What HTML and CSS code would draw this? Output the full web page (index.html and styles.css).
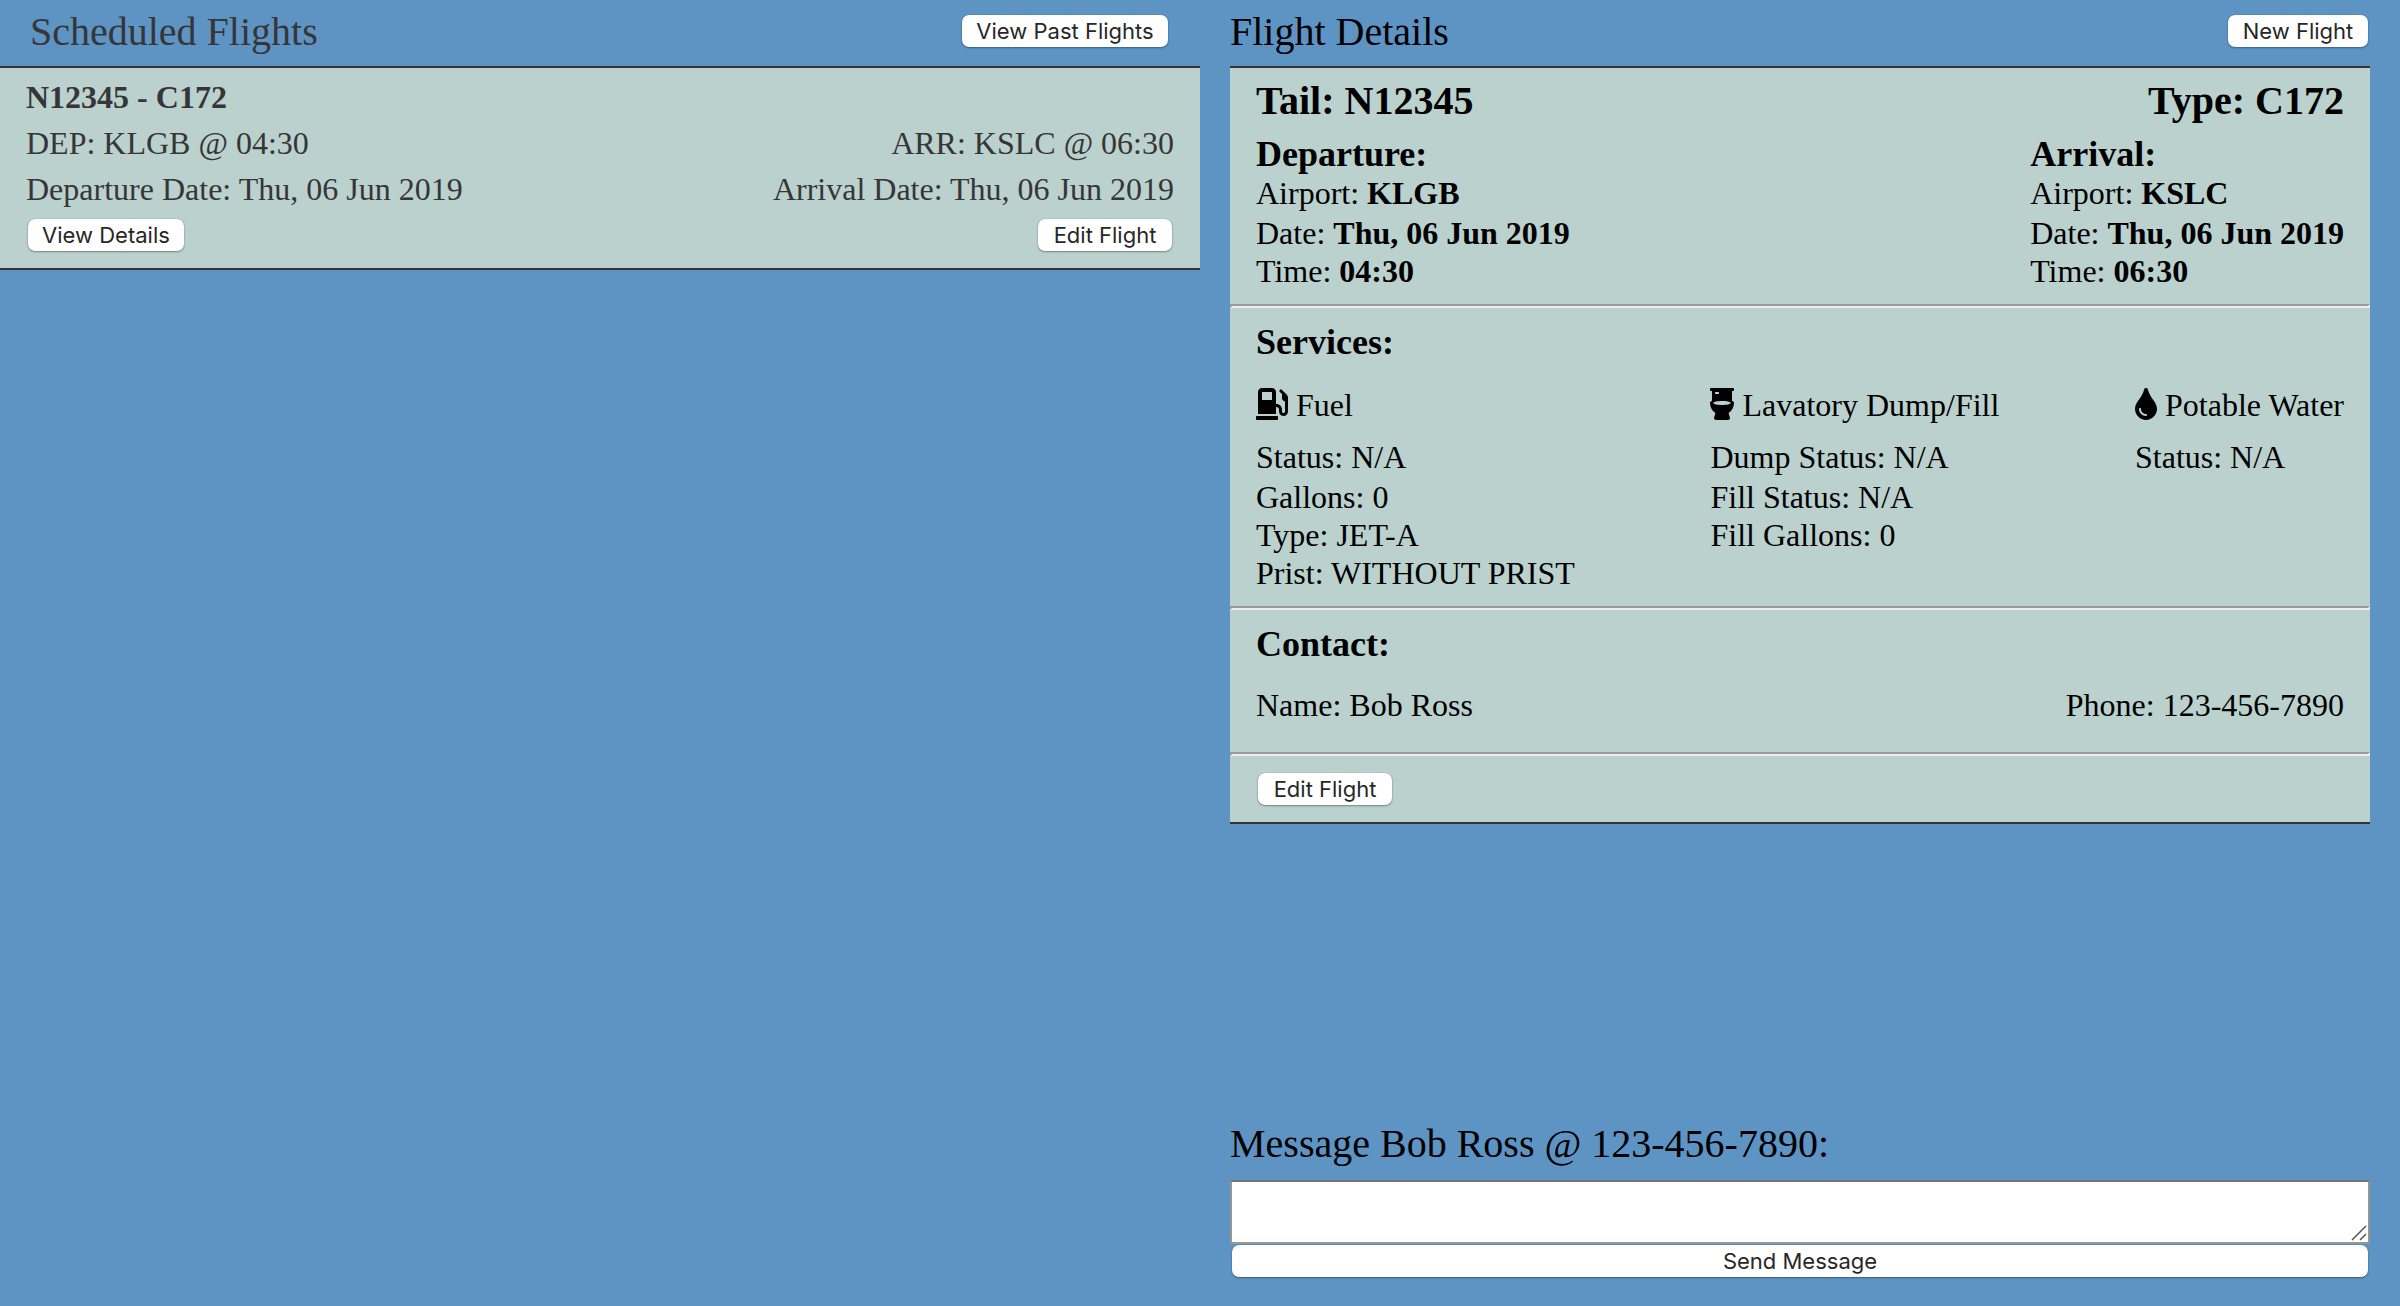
FILE: index.html
```html
<!DOCTYPE html>
<html lang="en">
<head>
<meta charset="utf-8">
<title>Flights</title>
<link rel="stylesheet" href="styles.css">
</head>
<body>
<main class="page">
  <section class="scheduled">
    <header class="bar bar-scheduled">
      <h2 class="title">Scheduled Flights</h2>
      <button class="btn btn-past">View Past Flights</button>
    </header>
    <article class="flight">
      <div class="flight-row"><strong>N12345 - C172</strong></div>
      <div class="flight-row"><span>DEP: KLGB @ 04:30</span><span>ARR: KSLC @ 06:30</span></div>
      <div class="flight-row"><span>Departure Date: Thu, 06 Jun 2019</span><span>Arrival Date: Thu, 06 Jun 2019</span></div>
      <div class="flight-actions">
        <button class="btn btn-view">View Details</button>
        <button class="btn btn-edit">Edit Flight</button>
      </div>
    </article>
  </section>

  <section class="details">
    <header class="bar">
      <h2 class="title">Flight Details</h2>
      <button class="btn btn-new">New Flight</button>
    </header>
    <article class="card">
      <div class="block block-flight">
        <div class="split headline"><span>Tail: N12345</span><span>Type: C172</span></div>
        <div class="split">
          <div class="leg">
            <h3 class="subtitle">Departure:</h3>
            <p class="line first">Airport: <strong>KLGB</strong></p>
            <p class="line">Date: <strong>Thu, 06 Jun 2019</strong></p>
            <p class="line">Time: <strong>04:30</strong></p>
          </div>
          <div class="leg">
            <h3 class="subtitle">Arrival:</h3>
            <p class="line first">Airport: <strong>KSLC</strong></p>
            <p class="line">Date: <strong>Thu, 06 Jun 2019</strong></p>
            <p class="line">Time: <strong>06:30</strong></p>
          </div>
        </div>
      </div>
      <hr class="rule">
      <div class="block">
        <h3 class="subtitle">Services:</h3>
        <div class="split services">
          <div class="service">
            <p class="line service-name">
              <svg class="icon" width="32" height="32" viewBox="0 0 512 512"><path d="M336 448H16c-8.800 0-16 7.200-16 16v32c0 8.800 7.200 16 16 16h320c8.800 0 16-7.200 16-16v-32c0-8.800-7.200-16-16-16zm157.200-340.700l-81-81c-6.200-6.200-16.400-6.200-22.600 0l-11.300 11.300c-6.200 6.200-6.200 16.400 0 22.600L416 97.900V160c0 28.100 20.900 51.300 48 55.200V376c0 13.200-10.800 24-24 24s-24-10.800-24-24v-32c0-48.600-39.400-88-88-88h-8V64c0-35.300-28.700-64-64-64H96C60.700 0 32 28.700 32 64v352h288V304h8c22.100 0 40 17.900 40 40v27.800c0 37.700 27 72 64.500 75.900 43 4.300 79.500-29.500 79.500-71.700V152.600c0-17-6.800-33.300-18.800-45.300zM256 192H96V64h160v128z"/></svg>
              <span>Fuel</span>
            </p>
            <p class="line first">Status: N/A</p>
            <p class="line">Gallons: 0</p>
            <p class="line">Type: JET-A</p>
            <p class="line">Prist: WITHOUT PRIST</p>
          </div>
          <div class="service">
            <p class="line service-name">
              <svg class="icon" width="24" height="32" viewBox="0 0 384 512"><path d="M368 48c8.800 0 16-7.200 16-16V16c0-8.800-7.200-16-16-16H16C7.200 0 0 7.200 0 16v16c0 8.800 7.200 16 16 16h16v156.700C11.800 214.800 0 226.900 0 240c0 67.200 34.600 126.200 86.800 160.500l-21.400 70.200C59.100 491.200 74.500 512 96 512h192c21.500 0 36.900-20.800 30.600-41.300l-21.400-70.200C349.400 366.200 384 307.200 384 240c0-13.100-11.800-25.200-32-35.300V48h16zM80 72c0-4.400 3.600-8 8-8h48c4.400 0 8 3.600 8 8v16c0 4.400-3.600 8-8 8H88c-4.400 0-8-3.600-8-8V72zm112 200c-77.100 0-139.600-14.300-139.600-32s62.500-32 139.600-32 139.600 14.300 139.600 32-62.500 32-139.600 32z"/></svg>
              <span>Lavatory Dump/Fill</span>
            </p>
            <p class="line first">Dump Status: N/A</p>
            <p class="line">Fill Status: N/A</p>
            <p class="line">Fill Gallons: 0</p>
          </div>
          <div class="service">
            <p class="line service-name">
              <svg class="icon" width="22" height="32" viewBox="0 0 352 512"><path d="M205.220 22.090c-7.940-28.780-49.440-30.120-58.440 0C100.010 179.850 0 222.720 0 333.910 0 432.350 78.720 512 176 512s176-79.650 176-178.090c0-111.750-99.790-153.340-146.780-311.820zM176 448c-61.750 0-112-50.250-112-112 0-8.840 7.160-16 16-16s16 7.160 16 16c0 44.110 35.890 80 80 80 8.840 0 16 7.160 16 16s-7.160 16-16 16z"/></svg>
              <span>Potable Water</span>
            </p>
            <p class="line first">Status: N/A</p>
          </div>
        </div>
      </div>
      <hr class="rule">
      <div class="block block-contact">
        <h3 class="subtitle">Contact:</h3>
        <div class="split contact"><p class="line">Name: Bob Ross</p><p class="line">Phone: 123-456-7890</p></div>
      </div>
      <hr class="rule">
      <div class="card-actions"><button class="btn btn-edit">Edit Flight</button></div>
    </article>

    <form class="message">
      <label class="message-label" for="message">Message Bob Ross @ 123-456-7890:</label>
      <div class="field">
        <textarea class="message-box" id="message"></textarea>
        <svg class="grip" width="16" height="16" viewBox="0 0 16 16"><path d="M1 15L15 1M9 15L15 9"/></svg>
      </div>
      <button class="btn btn-send" type="button">Send Message</button>
    </form>
  </section>
</main>
</body>
</html>
```
FILE: styles.css
```css
* {
  box-sizing: border-box;
  margin: 0;
  padding: 0;
}

body {
  background: #5e94c4;
  font-family: "Liberation Serif", "Times New Roman", serif;
  font-size: 32px;
  color: #000;
}

.page {
  display: grid;
  grid-template-columns: 1200px 1140px;
  grid-template-rows: 1306px;
  column-gap: 30px;
  height: 1306px;
  overflow: hidden;
}

.scheduled {
  color: #363636;
}

.bar {
  display: flex;
  justify-content: space-between;
  align-items: flex-start;
  height: 66px;
  padding: 15px 2px 0 0;
}

.bar-scheduled {
  padding: 15px 32px 0 30px;
}

.title {
  font-size: 40px;
  font-weight: 400;
  line-height: 34px;
}

.btn {
  height: 32px;
  padding-top: 1px;
  border: 0;
  border-radius: 7px;
  background: #fff;
  box-shadow: 0 0 1px rgba(0, 0, 0, 0.35), 0 1px 2px rgba(0, 0, 0, 0.35);
  color: #272727;
  font-family: Inter, "Liberation Sans", sans-serif;
  font-size: 22px;
  line-height: 31px;
  text-align: center;
  white-space: nowrap;
}

.btn-past { width: 206px; }
.btn-view { width: 156px; }
.btn-edit { width: 134px; }
.btn-new { width: 140px; }

.flight {
  height: 204px;
  padding: 6px 26px 0;
  border-top: 2px solid #343434;
  border-bottom: 2px solid #343434;
  background: #bbd1ce;
  line-height: 46px;
}

.flight-row,
.split {
  display: flex;
  justify-content: space-between;
}

.flight-actions {
  display: flex;
  justify-content: space-between;
  padding: 7px 2px 0;
}

.details {
  display: flex;
  flex-direction: column;
}

.card {
  border-top: 2px solid #343434;
  border-bottom: 2px solid #343434;
  background: #bbd1ce;
}

.block {
  padding: 13px 26px 14px;
}

.block-flight {
  padding-top: 10px;
}

.block-contact {
  padding-bottom: 28px;
}

.headline {
  margin-bottom: 10px;
  font-size: 40px;
  font-weight: 700;
  line-height: 46px;
}

.subtitle {
  font-size: 36px;
  line-height: 42px;
}

.leg .subtitle {
  line-height: 40px;
}

.line {
  line-height: 38px;
}

.first {
  margin-bottom: 2px;
}

.services {
  margin-top: 23px;
}

.service-name {
  display: flex;
  gap: 8px;
  margin-bottom: 14px;
}

.icon {
  margin-top: 2px;
}

.contact {
  margin-top: 21px;
}

.rule {
  height: 4px;
  border: 2px solid;
  border-color: #9a9a9a #eee #eee #9a9a9a;
}

.card-actions {
  display: flex;
  padding: 17px 28px;
}

.message {
  display: flex;
  flex-direction: column;
  margin-top: auto;
  padding-bottom: 29px;
}

.message-label {
  margin-bottom: 13px;
  font-size: 40px;
  line-height: 46px;
}

.field {
  position: relative;
  display: flex;
  margin-bottom: 1px;
}

.message-box {
  width: 100%;
  height: 64px;
  border: 2px solid #979797;
  border-top-color: #737373;
  background: #fff;
  resize: none;
}

.grip {
  position: absolute;
  right: 3px;
  bottom: 3px;
  fill: none;
  stroke: #555;
  stroke-width: 1.5;
}

.btn-send {
  margin: 0 2px;
}
```
